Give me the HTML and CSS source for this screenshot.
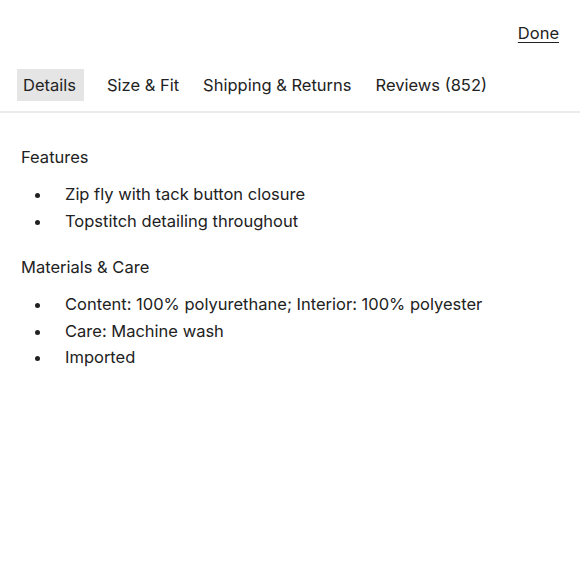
FILE: index.html
```html
<!DOCTYPE html>
<html>
<head>
<meta charset="utf-8">
<link rel="stylesheet" href="styles.css">
</head>
<body>
<div class="sheet">
  <div class="topbar"><a class="done">Done</a></div>
  <nav class="tabs">
    <span class="tab active">Details</span>
    <span class="tab">Size &amp; Fit</span>
    <span class="tab">Shipping &amp; Returns</span>
    <span class="tab">Reviews (852)</span>
  </nav>
  <div class="content">
    <h3 class="heading">Features</h3>
    <ul class="list">
      <li>Zip fly with tack button closure</li>
      <li>Topstitch detailing throughout</li>
    </ul>
    <h3 class="heading">Materials &amp; Care</h3>
    <ul class="list">
      <li>Content: 100% polyurethane; Interior: 100% polyester</li>
      <li>Care: Machine wash</li>
      <li>Imported</li>
    </ul>
  </div>
</div>
</body>
</html>
```
FILE: styles.css
```css
* { box-sizing: border-box; }
body {
  margin: 0;
  background: #fff;
  font-family: "Inter", "Noto Sans", sans-serif;
  color: #222;
}
.sheet { width: 580px; }
.topbar {
  display: flex;
  justify-content: flex-end;
  padding: 22px 21px 0 0;
  height: 69px;
}
.done {
  font-size: 16.5px;
  text-decoration: underline;
  text-underline-offset: 3px;
  color: #222;
  line-height: 22px;
}
.tabs {
  display: flex;
  align-items: center;
  gap: 12px;
  padding: 0 0 10px 17px;
  border-bottom: 2px solid #ececec;
}
.tab {
  font-size: 16.5px;
  line-height: 32px;
  padding: 0 6px;
}
.tab.active {
  background: #e5e5e5;
  padding: 0 8px 0 6px;
  margin-right: 5px;
}
.content { padding: 32px 0 0 21px; }
.heading {
  margin: 0;
  font-size: 16.5px;
  font-weight: 400;
  line-height: 24px;
}
.list {
  list-style: none;
  margin: 12px 0 21px;
  padding: 0 0 0 44px;
  font-size: 16.5px;
  line-height: 26.5px;
}
.list li { position: relative; }
.list li::before {
  content: "";
  position: absolute;
  left: -30px;
  top: 12px;
  width: 5px;
  height: 5px;
  border-radius: 50%;
  background: #222;
}
```
